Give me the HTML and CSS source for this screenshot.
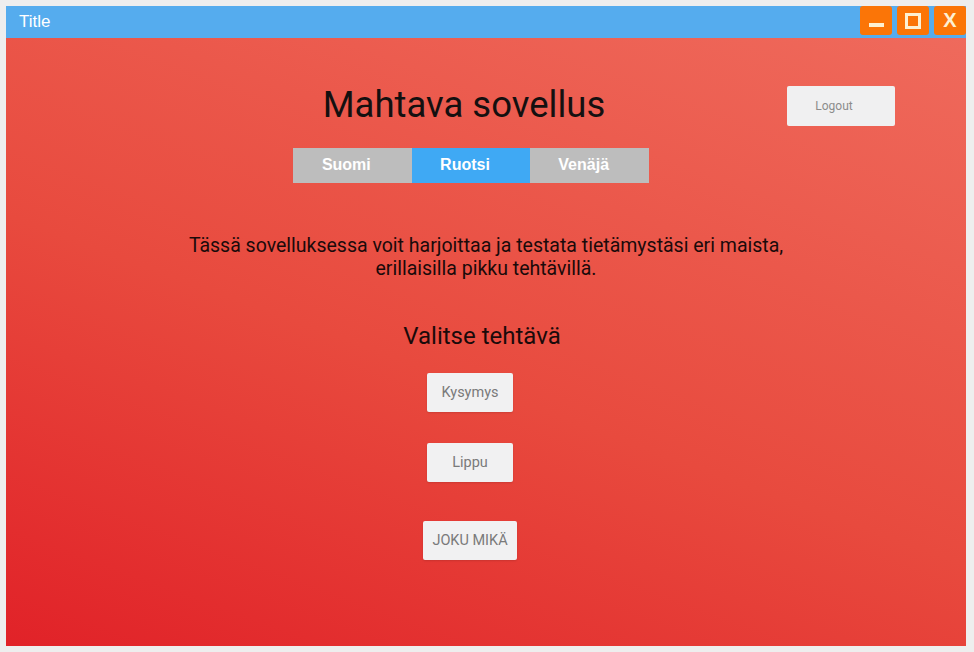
FILE: index.html
```html
<!DOCTYPE html>
<html lang="fi">
<head>
<meta charset="utf-8">
<title>Title</title>
<link rel="stylesheet" href="styles.css">
</head>
<body>
<div class="window">
  <div class="titlebar">
    <span class="title">Title</span>
    <div class="controls">
      <button class="ctl" aria-label="minimize"><span class="min-bar"></span></button>
      <button class="ctl" aria-label="maximize"><span class="max-box"></span></button>
      <button class="ctl ctl-x" aria-label="close">X</button>
    </div>
  </div>
  <div class="content">
    <div class="header">
      <div class="center-col">
        <h1 class="heading">Mahtava sovellus</h1>
        <div class="tabs">
          <div class="tab">Suomi</div>
          <div class="tab tab-active">Ruotsi</div>
          <div class="tab">Venäjä</div>
        </div>
      </div>
      <button class="logout">Logout</button>
    </div>
    <p class="intro">Tässä sovelluksessa voit harjoittaa ja testata tietämystäsi eri maista,<br>erillaisilla pikku tehtävillä.</p>
    <h2 class="subheading">Valitse tehtävä</h2>
    <div class="tasks">
      <button class="task task-1">Kysymys</button>
      <button class="task task-2">Lippu</button>
      <button class="task task-3">JOKU MIKÄ</button>
    </div>
  </div>
</div>
</body>
</html>
```
FILE: styles.css
```css
html, body {
  margin: 0;
  padding: 0;
  background: #eeeeee;
}
body {
  padding: 6px;
  font-family: "Liberation Sans", Arial, sans-serif;
}
.window {
  width: 960px;
  height: 640px;
  display: flex;
  flex-direction: column;
}
.titlebar {
  height: 32px;
  background: #55acee;
  display: flex;
  align-items: flex-start;
  justify-content: space-between;
  flex: none;
}
.title {
  color: #ffffff;
  font-size: 17px;
  line-height: 32px;
  padding-left: 13px;
}
.controls {
  display: flex;
  gap: 5px;
}
.ctl {
  width: 32px;
  height: 29px;
  border: none;
  border-radius: 3px;
  background: #fb7507;
  padding: 0;
  display: flex;
  align-items: center;
  justify-content: center;
  color: #fdf0d2;
  font-family: "Liberation Sans", Arial, sans-serif;
  font-size: 20px;
  font-weight: bold;
}
.min-bar {
  display: block;
  width: 15px;
  height: 4px;
  background: #fdf0d2;
  margin-top: 9px;
}
.max-box {
  display: block;
  width: 10px;
  height: 10px;
  border: 3px solid #fdf0d2;
}
.content {
  flex: 1;
  background: linear-gradient(20deg, #e12228 0%, #e84a3e 45%, #ef6a5c 100%);
  display: flex;
  flex-direction: column;
  align-items: center;
}
.header {
  align-self: stretch;
  display: flex;
  align-items: flex-start;
  padding-left: 287px;
}
.center-col {
  width: 356px;
  display: flex;
  flex-direction: column;
}
.heading {
  margin: 46px 14px 0 0;
  font-family: Roboto, "Liberation Sans", sans-serif;
  font-weight: normal;
  font-size: 36.5px;
  line-height: 42px;
  color: #141010;
  text-align: center;
}
.tabs {
  margin-top: 22px;
  display: flex;
  height: 35px;
}
.tab {
  flex: 1;
  background: #bdbdbd;
  color: #ffffff;
  font-weight: bold;
  font-size: 16px;
  line-height: 33px;
  text-align: center;
  padding-right: 12px;
}
.tab-active {
  background: #3fa9f4;
}
.logout {
  margin: 48px 0 0 138px;
  width: 108px;
  height: 40px;
  border: none;
  border-radius: 2px;
  background: #f0f0f1;
  color: #8c8c8c;
  font-family: Roboto, "Liberation Sans", sans-serif;
  font-size: 12px;
  padding: 0 14px 0 0;
}
.intro {
  margin: 51px 0 0 0;
  font-family: Roboto, "Liberation Sans", sans-serif;
  font-size: 19.5px;
  line-height: 23px;
  color: #1a0a0a;
  text-align: center;
}
.subheading {
  margin: 42px 8px 0 0;
  font-family: Roboto, "Liberation Sans", sans-serif;
  font-weight: normal;
  font-size: 24px;
  line-height: 28px;
  color: #1a0a0a;
}
.tasks {
  display: flex;
  flex-direction: column;
  align-items: center;
  margin-top: 23px;
  margin-right: 32px;
}
.task {
  border: none;
  border-radius: 2px;
  background: #f1f1f2;
  color: #7a7a7a;
  font-family: Roboto, "Liberation Sans", sans-serif;
  font-size: 14.5px;
  height: 39px;
  width: 86px;
  padding: 0;
  box-shadow: 0 1px 2px rgba(0,0,0,0.12);
}
.task-2 {
  margin-top: 31px;
}
.task-3 {
  margin-top: 39px;
  width: 94px;
}
```
